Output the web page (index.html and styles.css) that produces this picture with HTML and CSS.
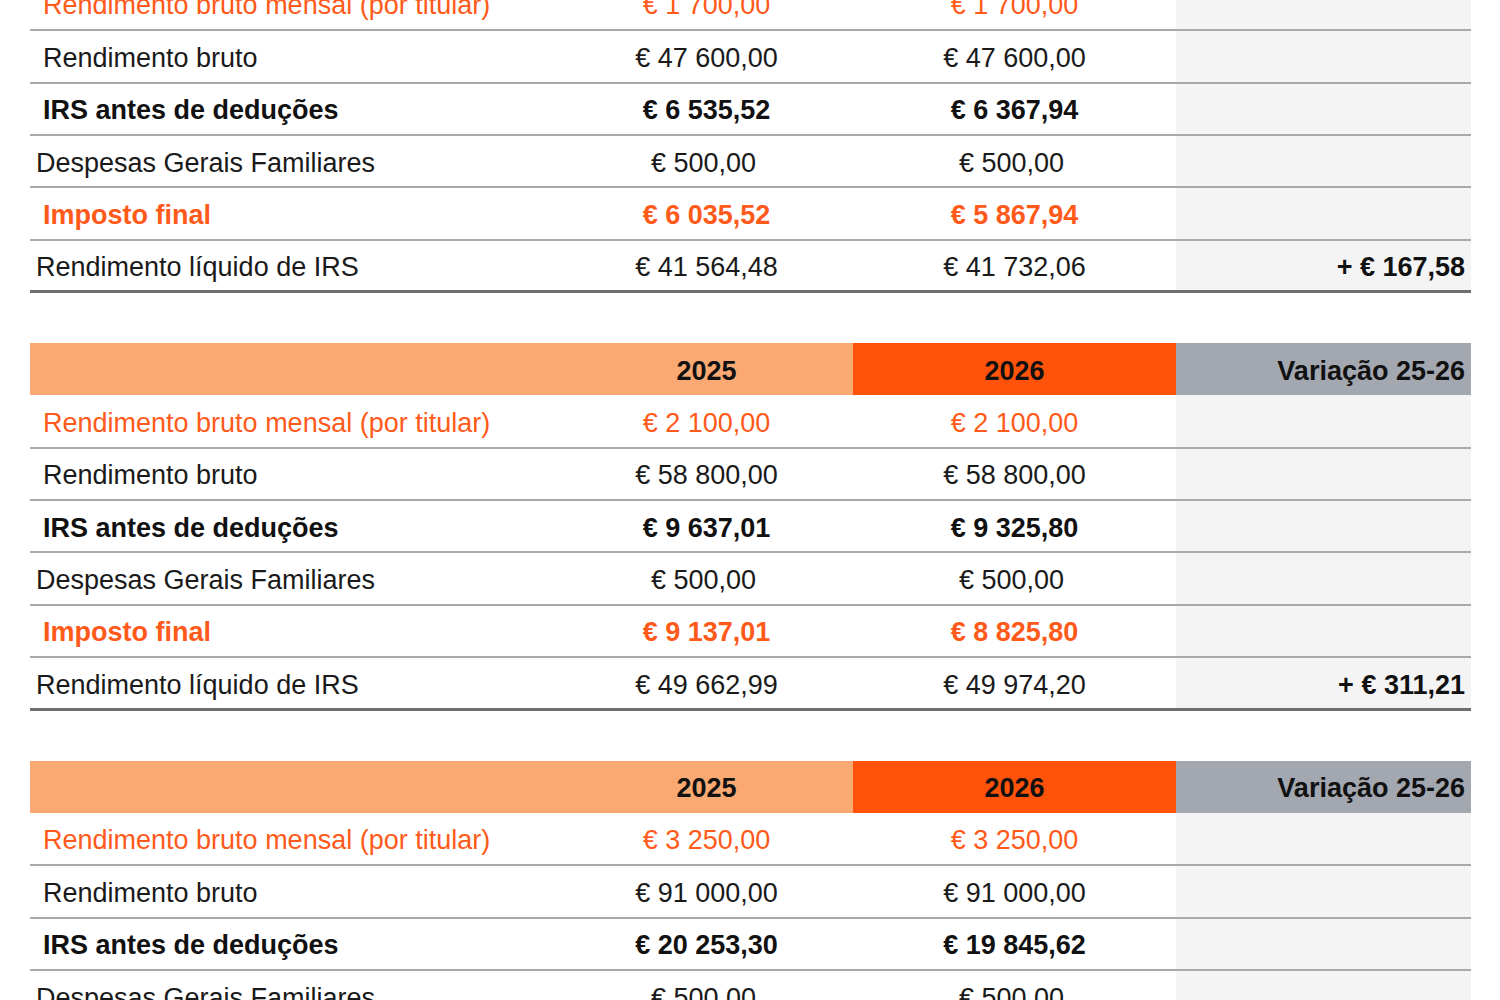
FILE: index.html
```html
<!DOCTYPE html>
<html lang="pt">
<head>
<meta charset="utf-8">
<title>IRS 2025 vs 2026</title>
<link rel="stylesheet" href="styles.css">
</head>
<body>
<div class="page">
  <table class="irs">
    <colgroup><col class="c-label"><col class="c-y1"><col class="c-y2"><col class="c-var"></colgroup>
    <thead>
      <tr><th class="h-label"></th><th class="h-2025">2025</th><th class="h-2026">2026</th><th class="h-var">Variação 25-26</th></tr>
    </thead>
    <tbody>
      <tr class="orange"><td class="lbl in">Rendimento bruto mensal (por titular)</td><td>€ 1 700,00</td><td>€ 1 700,00</td><td class="var"></td></tr>
      <tr><td class="lbl in">Rendimento bruto</td><td>€ 47 600,00</td><td>€ 47 600,00</td><td class="var"></td></tr>
      <tr class="bold"><td class="lbl in">IRS antes de deduções</td><td>€ 6 535,52</td><td>€ 6 367,94</td><td class="var"></td></tr>
      <tr><td class="lbl">Despesas Gerais Familiares</td><td class="sm">€ 500,00</td><td class="sm">€ 500,00</td><td class="var"></td></tr>
      <tr class="bold orange"><td class="lbl in">Imposto final</td><td>€ 6 035,52</td><td>€ 5 867,94</td><td class="var"></td></tr>
      <tr class="last"><td class="lbl">Rendimento líquido de IRS</td><td>€ 41 564,48</td><td>€ 41 732,06</td><td class="var strong">+ € 167,58</td></tr>
    </tbody>
  </table>

  <table class="irs">
    <colgroup><col class="c-label"><col class="c-y1"><col class="c-y2"><col class="c-var"></colgroup>
    <thead>
      <tr><th class="h-label"></th><th class="h-2025">2025</th><th class="h-2026">2026</th><th class="h-var">Variação 25-26</th></tr>
    </thead>
    <tbody>
      <tr class="orange"><td class="lbl in">Rendimento bruto mensal (por titular)</td><td>€ 2 100,00</td><td>€ 2 100,00</td><td class="var"></td></tr>
      <tr><td class="lbl in">Rendimento bruto</td><td>€ 58 800,00</td><td>€ 58 800,00</td><td class="var"></td></tr>
      <tr class="bold"><td class="lbl in">IRS antes de deduções</td><td>€ 9 637,01</td><td>€ 9 325,80</td><td class="var"></td></tr>
      <tr><td class="lbl">Despesas Gerais Familiares</td><td class="sm">€ 500,00</td><td class="sm">€ 500,00</td><td class="var"></td></tr>
      <tr class="bold orange"><td class="lbl in">Imposto final</td><td>€ 9 137,01</td><td>€ 8 825,80</td><td class="var"></td></tr>
      <tr class="last"><td class="lbl">Rendimento líquido de IRS</td><td>€ 49 662,99</td><td>€ 49 974,20</td><td class="var strong">+ € 311,21</td></tr>
    </tbody>
  </table>

  <table class="irs">
    <colgroup><col class="c-label"><col class="c-y1"><col class="c-y2"><col class="c-var"></colgroup>
    <thead>
      <tr><th class="h-label"></th><th class="h-2025">2025</th><th class="h-2026">2026</th><th class="h-var">Variação 25-26</th></tr>
    </thead>
    <tbody>
      <tr class="orange"><td class="lbl in">Rendimento bruto mensal (por titular)</td><td>€ 3 250,00</td><td>€ 3 250,00</td><td class="var"></td></tr>
      <tr><td class="lbl in">Rendimento bruto</td><td>€ 91 000,00</td><td>€ 91 000,00</td><td class="var"></td></tr>
      <tr class="bold"><td class="lbl in">IRS antes de deduções</td><td>€ 20 253,30</td><td>€ 19 845,62</td><td class="var"></td></tr>
      <tr><td class="lbl">Despesas Gerais Familiares</td><td class="sm">€ 500,00</td><td class="sm">€ 500,00</td><td class="var"></td></tr>
      <tr class="bold orange"><td class="lbl in">Imposto final</td><td>€ 19 753,30</td><td>€ 19 345,62</td><td class="var"></td></tr>
      <tr class="last"><td class="lbl">Rendimento líquido de IRS</td><td>€ 71 246,70</td><td>€ 71 654,38</td><td class="var strong">+ € 407,68</td></tr>
    </tbody>
  </table>
</div>
</body>
</html>
```

FILE: styles.css
```css
html, body {
  margin: 0;
  padding: 0;
  background: #ffffff;
}

body {
  font-family: "Liberation Sans", Arial, sans-serif;
  color: #1a1a1a;
}

.page {
  margin: -74px 0 0 30px;
  width: 1441px;
  display: flex;
  flex-direction: column;
  gap: 50px;
}

.irs {
  width: 1441px;
  border-collapse: collapse;
  table-layout: fixed;
  font-size: 27px;
}

.c-label { width: 530px; }
.c-y1 { width: 293px; }
.c-y2 { width: 323px; }
.c-var { width: 295px; }

.irs th {
  height: 52px;
  box-sizing: border-box;
  padding: 4px 0 0 0;
  font-weight: bold;
  color: #111;
  text-align: center;
  vertical-align: middle;
}

.h-label, .h-2025 { background: #fba972; }
.h-2026 { background: #ff520a; }
.irs th.h-var {
  background: #a3a7b0;
  text-align: right;
  padding-right: 6px;
}

.irs td {
  height: 52.33px;
  box-sizing: border-box;
  padding: 4px 0 0 0;
  text-align: center;
  vertical-align: middle;
  border-bottom: 2px solid #a9a9a9;
  white-space: nowrap;
}

.irs td.sm {
  padding-right: 6px;
}

.irs tr.last td {
  border-bottom: 3px solid #6e6e6e;
}

.irs td.lbl {
  text-align: left;
  padding-left: 6px;
}

.irs td.lbl.in {
  padding-left: 13px;
}

.irs td.var {
  background: #f4f4f4;
  text-align: right;
  padding-right: 6px;
}

.irs td.strong {
  font-weight: bold;
  color: #111;
}

.orange td {
  color: #ff5a1a;
}

.bold td {
  font-weight: bold;
  color: #111;
}

.bold.orange td {
  color: #ff5a1a;
}
```
